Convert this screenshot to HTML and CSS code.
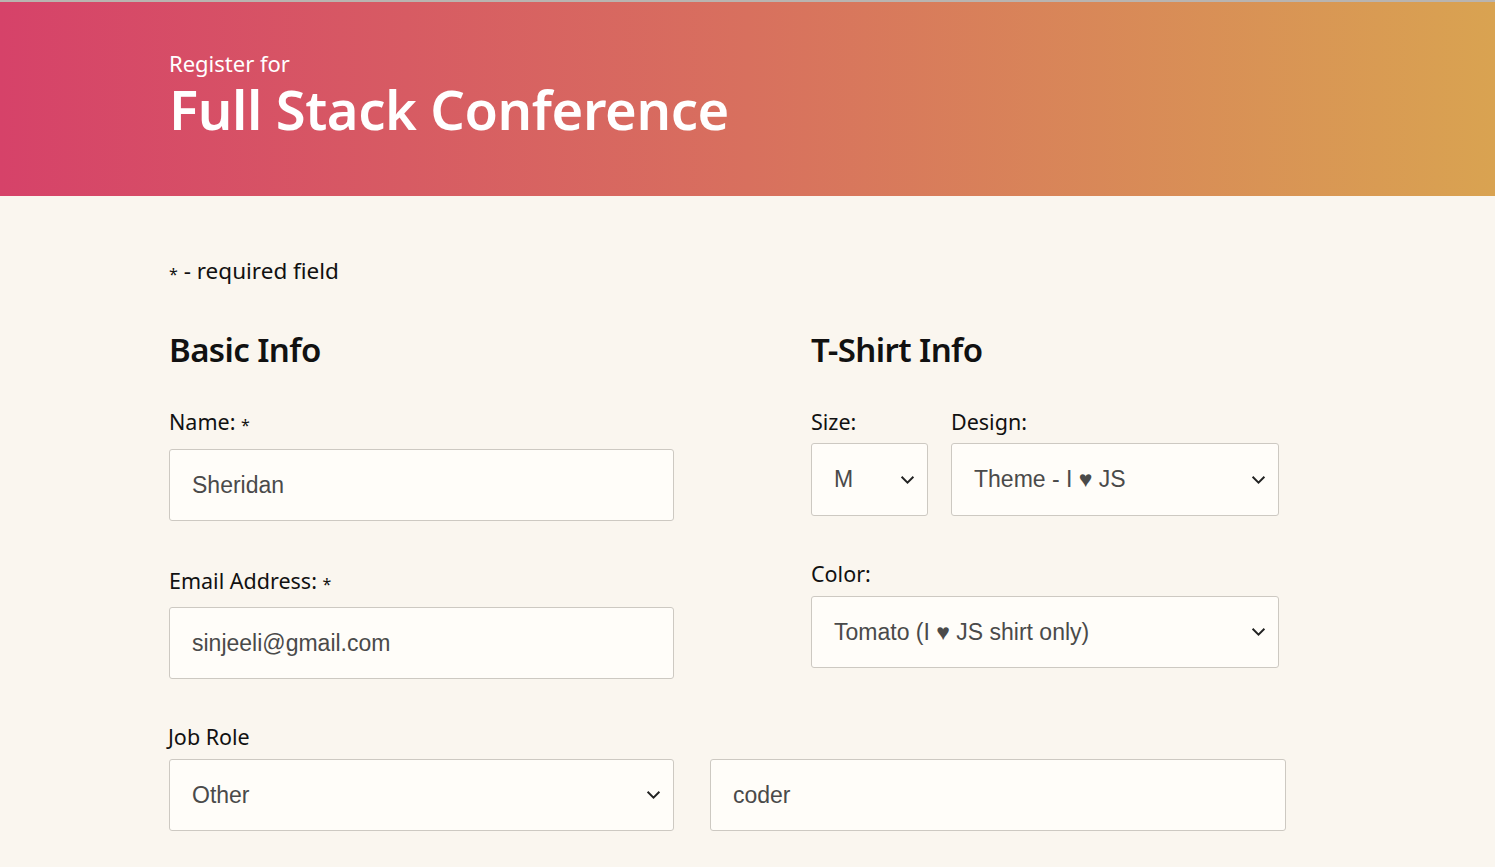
FILE: index.html
```html
<!DOCTYPE html>
<html lang="en">
<head>
<meta charset="utf-8">
<title>Register for Full Stack Conference</title>
<link rel="stylesheet" href="styles.css">
</head>
<body>
<header class="hero">
  <div class="hero-inner">
    <p class="hero-pre">Register for</p>
    <h1 class="hero-title">Full Stack Conference</h1>
  </div>
</header>
<main class="page">
  <p class="note"><span class="star">*</span> - required field</p>
  <div class="columns">
    <section class="col col-basic">
      <h2 class="section-title">Basic Info</h2>
      <div class="field field-name">
        <label class="label">Name: <span class="star">*</span></label>
        <div class="box"><span class="value">Sheridan</span></div>
      </div>
      <div class="field field-email">
        <label class="label">Email Address: <span class="star">*</span></label>
        <div class="box"><span class="value">sinjeeli@gmail.com</span></div>
      </div>
    </section>
    <section class="col col-shirt">
      <h2 class="section-title">T-Shirt Info</h2>
      <div class="shirt-row">
        <div class="field field-size">
          <label class="label">Size:</label>
          <div class="box select"><span class="value">M</span><svg class="chev" viewBox="0 0 14 9"><path d="M1.5 1.5 7 7l5.5-5.5" fill="none" stroke="#222" stroke-width="1.8"/></svg></div>
        </div>
        <div class="field field-design">
          <label class="label">Design:</label>
          <div class="box select"><span class="value">Theme - I ♥ JS</span><svg class="chev" viewBox="0 0 14 9"><path d="M1.5 1.5 7 7l5.5-5.5" fill="none" stroke="#222" stroke-width="1.8"/></svg></div>
        </div>
      </div>
      <div class="field field-color">
        <label class="label">Color:</label>
        <div class="box select"><span class="value">Tomato (I ♥ JS shirt only)</span><svg class="chev" viewBox="0 0 14 9"><path d="M1.5 1.5 7 7l5.5-5.5" fill="none" stroke="#222" stroke-width="1.8"/></svg></div>
      </div>
    </section>
  </div>
  <div class="job">
    <label class="label">Job Role</label>
    <div class="job-row">
      <div class="box select job-select"><span class="value">Other</span><svg class="chev" viewBox="0 0 14 9"><path d="M1.5 1.5 7 7l5.5-5.5" fill="none" stroke="#222" stroke-width="1.8"/></svg></div>
      <div class="box job-other"><span class="value">coder</span></div>
    </div>
  </div>
</main>
</body>
</html>
```
FILE: styles.css
```css
html, body {
  margin: 0;
  padding: 0;
}
body {
  background: #faf6ef;
  font-family: "Noto Sans", "Open Sans", sans-serif;
  color: #111;
  overflow: hidden;
}
.hero {
  border-top: 2px solid #b9b4b0;
  height: 194px;
  background: linear-gradient(90deg, #d64269 0%, #d8705e 50%, #d9a351 100%);
  color: #fff;
}
.hero-inner {
  padding: 49px 0 0 169px;
}
.hero-pre {
  margin: 0;
  font-size: 22px;
  line-height: 24px;
}
.hero-title {
  margin: 6px 0 0;
  font-size: 54.3px;
  line-height: 56px;
  font-weight: 600;
  letter-spacing: -0.4px;
}
.page {
  padding: 0 0 0 169px;
}
.note {
  margin: 0;
  padding-top: 59px;
  font-size: 22.5px;
  line-height: 32px;
}
.star {
  font-size: 16px;
  position: relative;
  top: 1px;
}
.columns {
  display: flex;
  gap: 137px;
  margin-top: 39px;
}
.col-basic { width: 505px; }
.col-shirt { width: 468px; }
.section-title {
  margin: 0;
  font-size: 33px;
  line-height: 44px;
  font-weight: 600;
  letter-spacing: -0.6px;
}
.label {
  display: block;
  font-size: 21.5px;
  line-height: 28px;
}
.box {
  box-sizing: border-box;
  background: #fffdf9;
  border: 1px solid #cdc9c2;
  border-radius: 3px;
  height: 72px;
  display: flex;
  align-items: center;
  padding: 0 22px;
  font-family: "Liberation Sans", Arial, sans-serif;
  font-size: 23px;
  color: #4a4a4a;
}
.select {
  justify-content: space-between;
}
.chev {
  width: 15px;
  height: 10px;
  margin-right: -10px;
}
.field-name { margin-top: 36px; }
.field-name .label { margin-bottom: 11px; }
.field-email { margin-top: 46px; }
.field-email .label { margin-bottom: 10px; }
.shirt-row {
  display: flex;
  gap: 23px;
  margin-top: 36px;
}
.shirt-row .label { margin-bottom: 7px; }
.field-size { width: 117px; }
.field-size .box { height: 73px; }
.field-design { width: 328px; }
.field-design .box { height: 73px; }
.field-color { margin-top: 44px; }
.field-color .label { margin-bottom: 8px; }
.job {
  margin-top: 44px;
}
.job .label { margin-left: -1px; margin-bottom: 8px; }
.job-row {
  display: flex;
  gap: 36px;
}
.job-select { width: 505px; }
.job-other { width: 576px; }
```
